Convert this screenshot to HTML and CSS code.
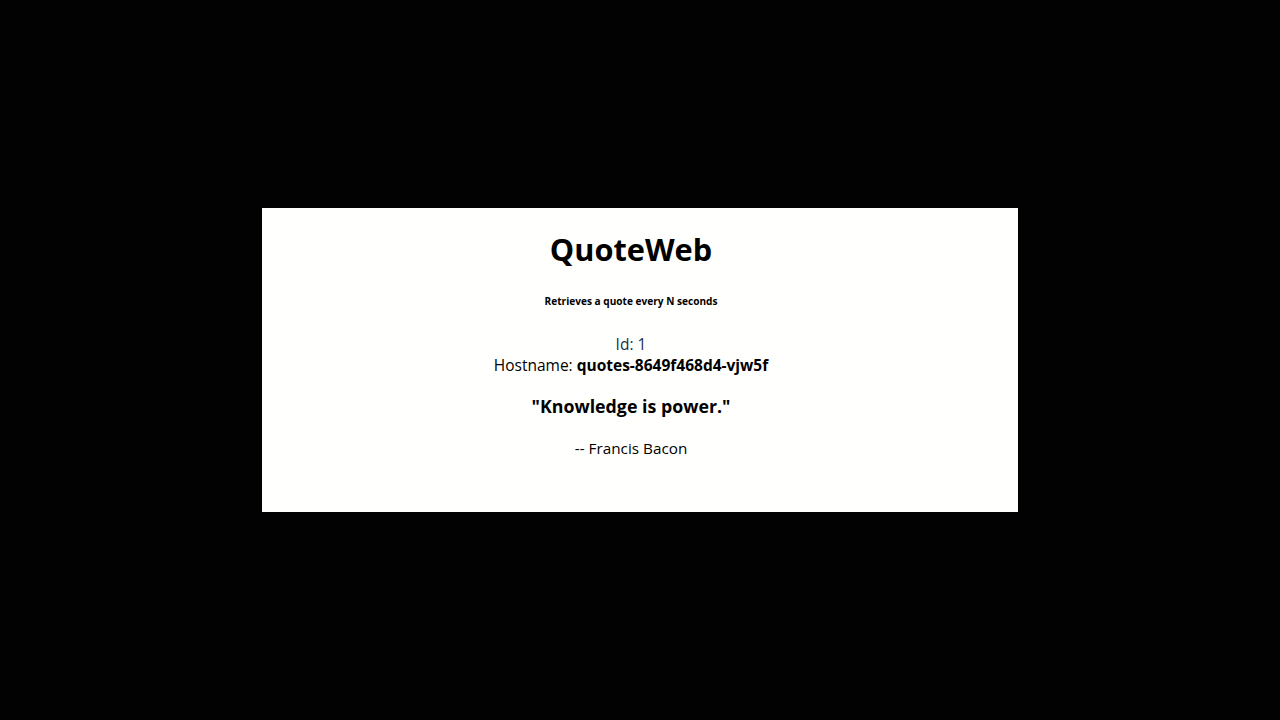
FILE: index.html
```html
<!DOCTYPE html>
<html>
<head>
<meta charset="utf-8">
<link rel="stylesheet" href="styles.css">
</head>
<body>
<div class="stage">
  <div class="card">
    <h1 class="title">QuoteWeb</h1>
    <h6 class="subtitle">Retrieves a quote every N seconds</h6>
    <div class="meta">
      <div class="id">Id: 1</div>
      <div class="host">Hostname: <b>quotes-8649f468d4-vjw5f</b></div>
    </div>
    <h3 class="quote">"Knowledge is power."</h3>
    <p class="author">-- Francis Bacon</p>
  </div>
</div>
</body>
</html>
```
FILE: styles.css
```css
html, body {
  margin: 0;
  padding: 0;
  background: #020203;
}
body {
  font-family: "Open Sans", "Noto Sans", sans-serif;
  color: #000;
}
.stage {
  width: 1280px;
  height: 720px;
  display: flex;
  align-items: center;
  justify-content: center;
}
.card {
  width: 756px;
  height: 304px;
  background: #fffffd;
  box-sizing: border-box;
  padding: 20px 18px 0 0;
  display: flex;
  flex-direction: column;
  align-items: center;
  text-align: center;
}
.title {
  margin: 0;
  font-size: 30.7px;
  line-height: 42px;
  font-weight: 700;
}
.subtitle {
  margin: 24px 0 0;
  font-size: 10.1px;
  line-height: 14px;
  font-weight: 700;
}
.meta {
  margin-top: 26px;
  font-size: 15.5px;
  line-height: 21px;
}
.id {
  color: #1c3048;
}
.quote {
  margin: 18px 0 0;
  font-size: 17.8px;
  line-height: 25px;
  font-weight: 700;
}
.author {
  margin: 19px 0 0;
  font-size: 15.3px;
  line-height: 21px;
}
```
